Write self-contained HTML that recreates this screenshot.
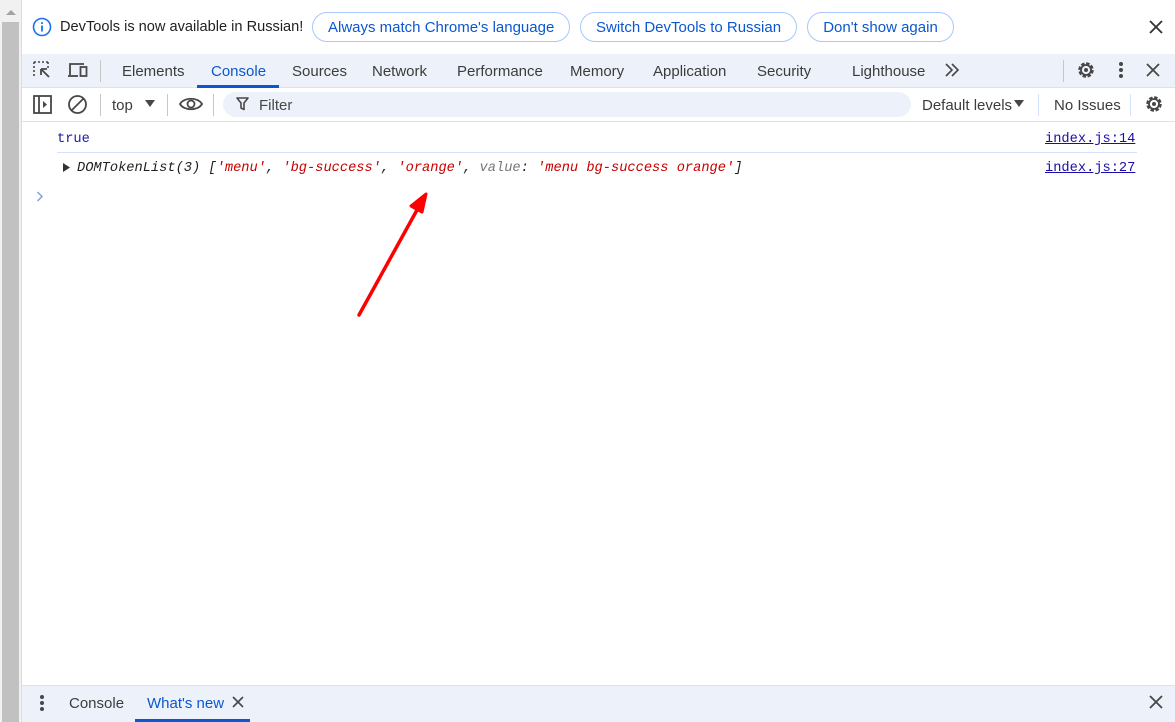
<!DOCTYPE html>
<html><head><meta charset="utf-8"><style>
*{margin:0;padding:0;box-sizing:border-box}
body{width:1175px;height:722px;overflow:hidden;background:#fff;font-family:"Liberation Sans",sans-serif;position:relative;color:#1f1f1f}
.a{position:absolute}
.btn{position:absolute;top:12px;height:30px;border:1px solid #a8c7fa;border-radius:15px;color:#0b57d0;font-size:15px;line-height:30px;padding:0 15px;white-space:nowrap;text-align:center}
.tab{position:absolute;top:63px;font-size:15px;color:#3c3c3c}
.mono{font-family:"Liberation Mono",monospace;font-size:13.7px;white-space:pre}
</style></head><body>
<div class="a" style="left:0;top:0;width:21px;height:722px;background:#f1f1f1"></div>
<div class="a" style="left:2px;top:22px;width:17px;height:700px;background:#c1c1c1"></div>
<svg class="a" style="left:5px;top:9px" width="12" height="8"><path d="M1 6L6 1L11 6Z" fill="#a3a3a3"/></svg>
<div class="a" style="left:21px;top:0;width:1px;height:722px;background:#dadce0"></div>

<svg class="a" style="left:32px;top:17px" width="20" height="20" viewBox="0 0 20 20"><circle cx="10" cy="10" r="8.5" fill="none" stroke="#1a73e8" stroke-width="1.6"/><rect x="9.1" y="8.5" width="1.8" height="6" fill="#1a73e8"/><rect x="9.1" y="5.2" width="1.8" height="1.8" fill="#1a73e8"/></svg>
<div class="a" style="left:60px;top:19px;font-size:14.6px;color:#1f1f1f">DevTools is now available in Russian!</div>
<div class="btn" style="left:312px;width:258px">Always match Chrome's language</div>
<div class="btn" style="left:580px;width:217px">Switch DevTools to Russian</div>
<div class="btn" style="left:807px;width:147px">Don't show again</div>
<svg class="a" style="left:1149px;top:20px" width="14" height="14"><path d="M1 1L13 13M13 1L1 13" stroke="#333" stroke-width="1.8"/></svg>

<div class="a" style="left:22px;top:54px;width:1153px;height:34px;background:#edf2fa;border-bottom:1px solid #d3e3fd"></div>
<svg class="a" style="left:33px;top:61px" width="20" height="20"><path d="M1 1h2M5 1h2M9 1h2M13 1h2M1 1v2M1 5v2M1 9v2M1 13v2M15 1v2M15 5v2" stroke="#474747" stroke-width="1.6"/><path d="M8 8L16 16M8 8h6M8 8v6" stroke="#474747" stroke-width="1.8" fill="none"/></svg>
<svg class="a" style="left:67px;top:61px" width="22" height="20"><path d="M3 14V3h14" stroke="#474747" stroke-width="1.8" fill="none"/><path d="M1 15h10" stroke="#474747" stroke-width="1.8"/><rect x="13.5" y="6" width="6" height="9" fill="none" stroke="#474747" stroke-width="1.8"/></svg>
<div class="a" style="left:100px;top:60px;width:1px;height:22px;background:#c7c7c7"></div>
<div class="tab" style="left:122px">Elements</div>
<div class="tab" style="left:211px;color:#0b57d0">Console</div>
<div class="a" style="left:197px;top:85px;width:82px;height:3px;background:#0b57d0"></div>
<div class="tab" style="left:292px">Sources</div>
<div class="tab" style="left:372px">Network</div>
<div class="tab" style="left:457px">Performance</div>
<div class="tab" style="left:570px">Memory</div>
<div class="tab" style="left:653px">Application</div>
<div class="tab" style="left:757px">Security</div>
<div class="tab" style="left:852px">Lighthouse</div>
<svg class="a" style="left:944px;top:63px" width="16" height="14"><path d="M2 1l6 6-6 6M8 1l6 6-6 6" stroke="#474747" stroke-width="1.6" fill="none"/></svg>
<div class="a" style="left:1063px;top:60px;width:1px;height:22px;background:#c7c7c7"></div>
<svg class="a" style="left:1076px;top:60px" width="20" height="20" viewBox="0 0 20 20"><circle cx="10" cy="10" r="6" fill="none" stroke="#474747" stroke-width="3.5" stroke-dasharray="3.2 1.5"/><circle cx="10" cy="10" r="5" fill="none" stroke="#474747" stroke-width="1.8"/><circle cx="10" cy="10" r="2" fill="#474747"/></svg>
<svg class="a" style="left:1118px;top:61px" width="6" height="18"><circle cx="3" cy="3" r="2" fill="#474747"/><circle cx="3" cy="9" r="2" fill="#474747"/><circle cx="3" cy="15" r="2" fill="#474747"/></svg>
<svg class="a" style="left:1146px;top:63px" width="14" height="14"><path d="M1 1L13 13M13 1L1 13" stroke="#474747" stroke-width="1.8"/></svg>

<div class="a" style="left:22px;top:121px;width:1153px;height:1px;background:#d3e3fd"></div>
<svg class="a" style="left:33px;top:95px" width="19" height="19"><rect x="1" y="1" width="17" height="17" fill="none" stroke="#474747" stroke-width="1.8"/><path d="M6 1v17" stroke="#474747" stroke-width="1.8"/><path d="M10 6l4 3.5-4 3.5z" fill="#474747"/></svg>
<svg class="a" style="left:67px;top:94px" width="21" height="21"><circle cx="10.5" cy="10.5" r="8.5" fill="none" stroke="#474747" stroke-width="1.8"/><path d="M4.5 16.5L16.5 4.5" stroke="#474747" stroke-width="1.8"/></svg>
<div class="a" style="left:100px;top:94px;width:1px;height:22px;background:#c7c7c7"></div>
<div class="a" style="left:112px;top:97px;font-size:15px;color:#3c3c3c">top</div>
<svg class="a" style="left:144px;top:99px" width="12" height="9"><path d="M1 1h10L6 8z" fill="#474747"/></svg>
<div class="a" style="left:167px;top:94px;width:1px;height:22px;background:#c7c7c7"></div>
<svg class="a" style="left:179px;top:96px" width="24" height="16"><path d="M1 8C5 1 19 1 23 8C19 15 5 15 1 8Z" fill="none" stroke="#474747" stroke-width="1.8"/><circle cx="12" cy="8" r="3.5" fill="none" stroke="#474747" stroke-width="1.8"/></svg>
<div class="a" style="left:213px;top:94px;width:1px;height:22px;background:#c7c7c7"></div>
<div class="a" style="left:223px;top:92px;width:688px;height:25px;border-radius:13px;background:#edf2fa"></div>
<svg class="a" style="left:236px;top:97px" width="13" height="14"><path d="M1 1h11L8 6v6.5L5 11V6z" fill="none" stroke="#474747" stroke-width="1.6" stroke-linejoin="round"/></svg>
<div class="a" style="left:259px;top:97px;font-size:15px;color:#474747">Filter</div>
<div class="a" style="left:922px;top:97px;font-size:15px;color:#3c3c3c">Default levels</div>
<svg class="a" style="left:1013px;top:99px" width="12" height="9"><path d="M1 1h10L6 8z" fill="#474747"/></svg>
<div class="a" style="left:1038px;top:94px;width:1px;height:22px;background:#d3e3fd"></div>
<div class="a" style="left:1054px;top:97px;font-size:15px;color:#3c3c3c">No Issues</div>
<div class="a" style="left:1130px;top:94px;width:1px;height:22px;background:#d3e3fd"></div>
<svg class="a" style="left:1144px;top:94px" width="20" height="20" viewBox="0 0 20 20"><circle cx="10" cy="10" r="6" fill="none" stroke="#474747" stroke-width="3.5" stroke-dasharray="3.2 1.5"/><circle cx="10" cy="10" r="5" fill="none" stroke="#474747" stroke-width="1.8"/><circle cx="10" cy="10" r="2" fill="#474747"/></svg>

<div class="a mono" style="left:57px;top:132px;color:#1a1aa6">true</div>
<div class="a mono" style="left:1045px;top:132px;color:#1a0dab;text-decoration:underline">index.js:14</div>
<div class="a" style="left:57px;top:152px;width:1080px;height:1px;background:#d3e3fd"></div>
<svg class="a" style="left:62px;top:162px" width="9" height="11"><path d="M1 1l7 4.5L1 10z" fill="#333"/></svg>
<div class="a mono" style="left:77px;top:161px;font-style:italic;color:#1f1f1f">DOMTokenList(3) [<span style="color:#c80000">'menu'</span>, <span style="color:#c80000">'bg-success'</span>, <span style="color:#c80000">'orange'</span>, <span style="color:#777">value</span>: <span style="color:#c80000">'menu bg-success orange'</span>]</div>
<div class="a mono" style="left:1045px;top:161px;color:#1a0dab;text-decoration:underline">index.js:27</div>
<svg class="a" style="left:36px;top:191px" width="8" height="11"><path d="M1.5 1l4.5 4.5L1.5 10" fill="none" stroke="#7a9fd8" stroke-width="1.4"/></svg>

<svg class="a" style="left:0;top:0" width="1175" height="722"><path d="M359 315L417 210" stroke="#f00" stroke-width="3.5" stroke-linecap="round"/><path d="M426 194L411 206L422 212Z" fill="#f00" stroke="#f00" stroke-width="3" stroke-linejoin="round"/></svg>

<div class="a" style="left:22px;top:685px;width:1153px;height:37px;background:#edf2fa;border-top:1px solid #d3e3fd"></div>
<svg class="a" style="left:39px;top:694px" width="6" height="18"><circle cx="3" cy="3" r="2" fill="#474747"/><circle cx="3" cy="9" r="2" fill="#474747"/><circle cx="3" cy="15" r="2" fill="#474747"/></svg>
<div class="a" style="left:69px;top:695px;font-size:15px;color:#3c3c3c">Console</div>
<div class="a" style="left:147px;top:695px;font-size:15px;color:#0b57d0">What's new</div>
<svg class="a" style="left:232px;top:696px" width="12" height="12"><path d="M1 1L11 11M11 1L1 11" stroke="#474747" stroke-width="1.6"/></svg>
<div class="a" style="left:135px;top:719px;width:115px;height:3px;background:#0b57d0"></div>
<svg class="a" style="left:1149px;top:695px" width="14" height="14"><path d="M1 1L13 13M13 1L1 13" stroke="#474747" stroke-width="1.8"/></svg>
</body></html>
